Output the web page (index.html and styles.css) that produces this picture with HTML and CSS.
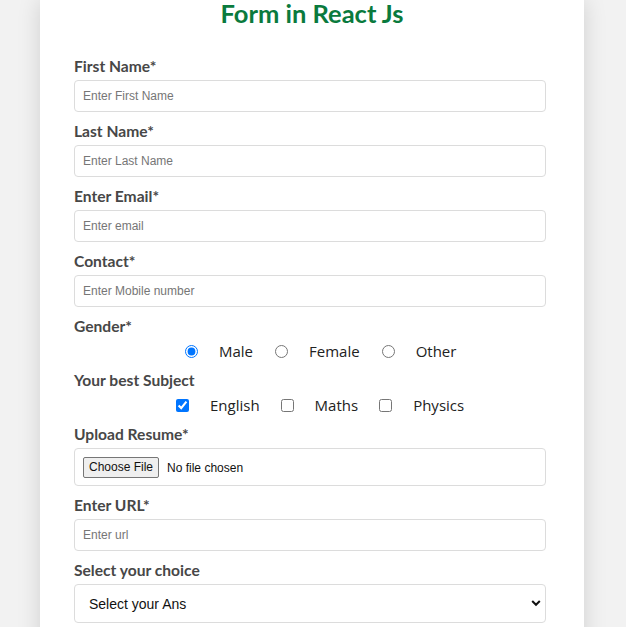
FILE: index.html
```html
<!DOCTYPE html>
<html lang="en">
<head>
<meta charset="utf-8">
<title>Form in React Js</title>
<link rel="stylesheet" href="styles.css">
</head>
<body>
<div class="card">
  <h1 class="title">Form in React Js</h1>
  <form class="form">
    <label class="label" for="fn">First Name*</label>
    <input class="field" id="fn" type="text" placeholder="Enter First Name">

    <label class="label" for="ln">Last Name*</label>
    <input class="field" id="ln" type="text" placeholder="Enter Last Name">

    <label class="label" for="em">Enter Email*</label>
    <input class="field" id="em" type="email" placeholder="Enter email">

    <label class="label" for="ct">Contact*</label>
    <input class="field" id="ct" type="tel" placeholder="Enter Mobile number">

    <div class="label">Gender*</div>
    <div class="choices radios">
      <label class="choice"><input type="radio" name="g" checked><span>Male</span></label>
      <label class="choice"><input type="radio" name="g"><span>Female</span></label>
      <label class="choice"><input type="radio" name="g"><span>Other</span></label>
    </div>

    <div class="label">Your best Subject</div>
    <div class="choices checks">
      <label class="choice"><input type="checkbox" checked><span>English</span></label>
      <label class="choice"><input type="checkbox"><span>Maths</span></label>
      <label class="choice"><input type="checkbox"><span>Physics</span></label>
    </div>

    <label class="label" for="rs">Upload Resume*</label>
    <div class="filebox"><input class="file" id="rs" type="file"></div>

    <label class="label" for="url">Enter URL*</label>
    <input class="field" id="url" type="url" placeholder="Enter url">

    <label class="label" for="sel">Select your choice</label>
    <div class="selectwrap">
      <select class="select" id="sel">
        <option>Select your Ans</option>
        <option>Frontend</option>
        <option>Backend</option>
      </select>
      <svg class="chev" width="10" height="8" viewBox="0 0 10 8"><path d="M1.2 2 L5 5.8 L8.8 2" fill="none" stroke="#111" stroke-width="2"/></svg>
    </div>
  </form>
</div>
</body>
</html>
```
FILE: styles.css
```css
html, body {
  margin: 0;
  padding: 0;
  background: #f2f2f2;
}
body {
  font-family: "Lato", "Liberation Sans", sans-serif;
}
.card {
  width: 544px;
  margin-left: 40px;
  background: #fff;
  box-shadow: 0 0 22px rgba(0, 0, 0, 0.14);
  padding: 0 38px 40px 34px;
  box-sizing: border-box;
  min-height: 700px;
}
.title {
  margin: 0;
  padding-top: 1px;
  height: 25px;
  line-height: 24px;
  font-size: 25.5px;
  font-weight: 700;
  color: #0a7a3d;
  text-align: center;
  padding-left: 4px;
}
.form {
  display: flex;
  flex-direction: column;
  padding-top: 31px;
}
.label {
  display: block;
  font-size: 15.6px;
  line-height: 18px;
  height: 18px;
  font-weight: 700;
  color: #474747;
  margin-bottom: 5px;
}
.field {
  box-sizing: border-box;
  width: 472px;
  height: 32px;
  margin: 0 0 10px 0;
  border: 1px solid #dcdcdc;
  border-radius: 4px;
  padding: 0 8px;
  font-family: "Liberation Sans", Arial, sans-serif;
  font-size: 12px;
  color: #333;
  outline: none;
}
.field::placeholder {
  color: #767676;
}
.choices {
  display: flex;
  align-items: center;
  height: 20px;
  margin: 1px 0 10px 0;
  font-family: "Open Sans", "Noto Sans", sans-serif;
  font-size: 15px;
  color: #222;
}
.radios {
  padding-left: 111px;
  gap: 22px;
}
.checks {
  padding-left: 102px;
  gap: 21px;
}
.choice {
  display: flex;
  align-items: center;
}
.choice input {
  margin: 0 21px 0 0;
  width: 13px;
  height: 13px;
}
.filebox {
  box-sizing: border-box;
  width: 472px;
  height: 38px;
  border: 1px solid #dcdcdc;
  border-radius: 4px;
  padding: 0 8px;
  display: flex;
  align-items: center;
  margin-bottom: 10px;
}
.file {
  font-family: "Liberation Sans", Arial, sans-serif;
  font-size: 12px;
  color: #111;
}
.file::file-selector-button {
  font-family: "Liberation Sans", Arial, sans-serif;
  font-size: 12px;
  height: 21px;
  padding: 0 5px;
  margin-right: 8px;
  background: #efefef;
  border: 1px solid #767676;
  border-radius: 2px;
  color: #111;
}
.selectwrap {
  position: relative;
  width: 472px;
}
.select {
  appearance: none;
  -webkit-appearance: none;
  box-sizing: border-box;
  width: 472px;
  height: 39px;
  border: 1px solid #dcdcdc;
  border-radius: 4px;
  background: #fff;
  padding: 0 14px;
  font-family: "Liberation Sans", Arial, sans-serif;
  font-size: 14px;
  color: #111;
  outline: none;
}
.chev {
  position: absolute;
  right: 5px;
  top: 15px;
}
```
